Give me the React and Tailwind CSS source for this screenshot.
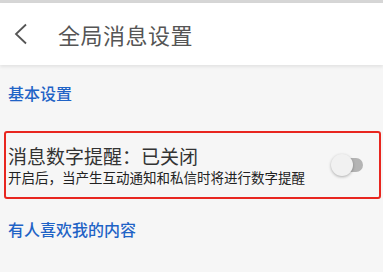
import React, { useState } from 'react';

const font = { fontFamily: '"Noto Sans CJK SC", "Noto Sans", sans-serif' };

const Toggle = ({ on, onChange }) => (
    <button
        onClick={() => onChange(!on)}
        className="relative w-[34px] h-[24px] shrink-0"
    >
        <span className={`absolute left-[6px] top-[5px] w-[26px] h-[14px] rounded-full ${on ? 'bg-[#8fb5ea]' : 'bg-[#b4b4b4]'}`} />
        <span
            className={`absolute top-[1px] w-[22px] h-[22px] rounded-full shadow-[0_1px_3px_rgba(0,0,0,0.3)] ${on ? 'left-[14px] bg-[#1a66cc]' : 'left-0 bg-[#f1f1f1]'}`}
        />
    </button>
);

export default function App() {
    const [on, setOn] = useState(false);

    return (
        <div className="w-[383px] h-[272px] bg-[#f6f6f6] overflow-hidden" style={font}>
            {/* barre du haut */}
            <div className="h-[3px] bg-[#d6d6d6]" />
            <div className="h-[62px] bg-white flex items-center shadow-[0_2px_3px_rgba(0,0,0,0.08)] relative">
                <svg width="16" height="22" viewBox="0 0 16 22" className="ml-[13px]">
                    <path d="M13 1.5 L3 11 L13 20.5" fill="none" stroke="#555" strokeWidth="1.8" />
                </svg>
                <h1 className="ml-[29px] text-[22px] leading-none text-[#555] tracking-[0.5px]">全局消息设置</h1>
            </div>

            <div className="px-[8px] pt-[20px] text-[16px] leading-none font-medium text-[#1f63c6]">基本设置</div>

            <div className="ml-[4px] mr-[2px] mt-[30px] h-[68px] border-2 border-[#e8261f] rounded-[3px] flex items-center pl-[2px] pr-[14px]">
                <div className="flex-1 pt-[1px]">
                    <div className="text-[19px] leading-none text-[#333]">消息数字提醒：{on ? '已开启' : '已关闭'}</div>
                    <div className="mt-[6px] text-[13.5px] leading-none text-[#222]">开启后，当产生互动通知和私信时将进行数字提醒</div>
                </div>
                <Toggle on={on} onChange={setOn} />
            </div>

            <div className="px-[8px] pt-[22px] text-[16px] leading-none font-medium text-[#1f63c6]">有人喜欢我的内容</div>
        </div>
    );
}
